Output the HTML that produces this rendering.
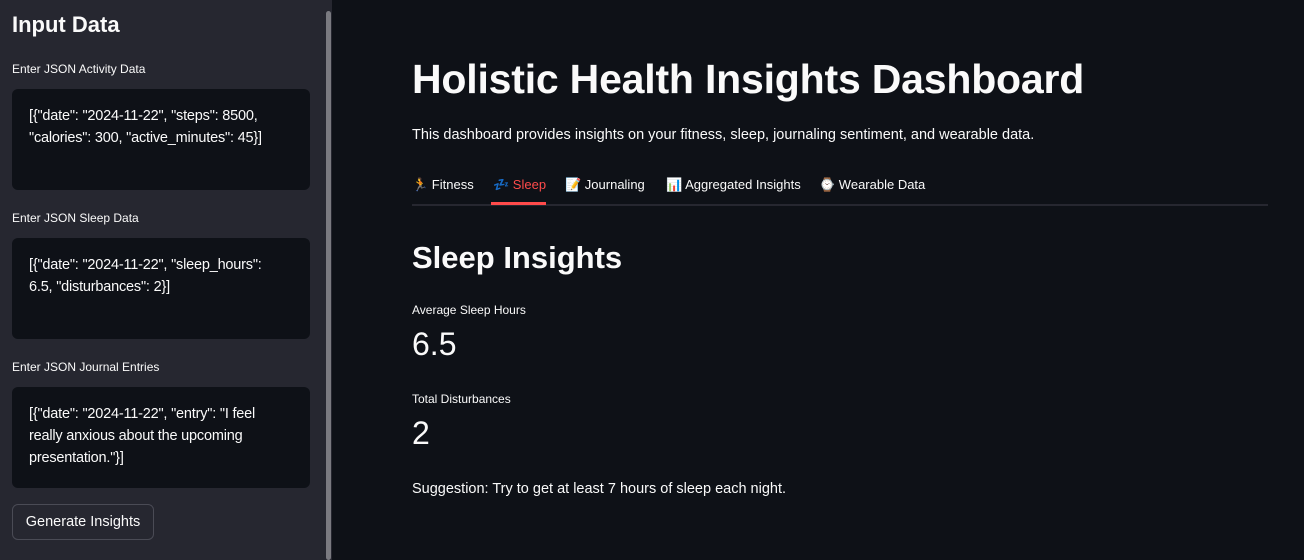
<!DOCTYPE html>
<html><head><style>
html,body{margin:0;width:1304px;height:560px;overflow:hidden}
body{background:#0e1117;font-family:"Liberation Sans",sans-serif;color:#fafafa;position:relative}
.side{position:absolute;left:0;top:0;width:332px;height:560px;background:#262730;overflow:hidden}
.sb{position:absolute;left:326px;top:11px;width:5px;height:549px;background:#7a7a80;border-radius:3px}
h2{position:absolute;left:12px;top:12px;margin:0;font-size:22px;font-weight:bold}
.lbl{position:absolute;left:12px;font-size:12px}
.ta{position:absolute;left:12px;width:298px;height:101px;background:#0e1117;border-radius:6px;box-sizing:border-box;padding:16px 30px 16px 17px;font-size:14.5px;line-height:22px;letter-spacing:-0.2px}
.btn{position:absolute;left:12px;top:504px;width:142px;height:36px;border:1px solid #4a4b55;border-radius:6px;box-sizing:border-box;font-size:14.5px;text-align:center;line-height:34px}
.m{position:absolute;left:412px}
h1{position:absolute;left:412px;top:56px;margin:0;font-size:41px;font-weight:bold;letter-spacing:-0.2px}
.tabs{position:absolute;left:412px;top:176px;width:856px;height:28px;border-bottom:2px solid #262730;font-size:13px}
.tabs span{position:absolute;top:1px}
.ul{position:absolute;left:79px;top:26px;width:55px;height:3px;background:#ff4b4b}
</style></head><body>
<div class="side">
<h2>Input Data</h2>
<div class="lbl" style="top:62px">Enter JSON Activity Data</div>
<div class="ta" style="top:89px">[{"date": "2024-11-22", "steps": 8500, "calories": 300, "active_minutes": 45}]</div>
<div class="lbl" style="top:211px">Enter JSON Sleep Data</div>
<div class="ta" style="top:238px">[{"date": "2024-11-22", "sleep_hours": 6.5, "disturbances": 2}]</div>
<div class="lbl" style="top:360px">Enter JSON Journal Entries</div>
<div class="ta" style="top:387px">[{"date": "2024-11-22", "entry": "I feel really anxious about the upcoming presentation."}]</div>
<div class="btn">Generate Insights</div>
<div class="sb"></div>
</div>
<h1>Holistic Health Insights Dashboard</h1>
<div class="m" style="top:127px;font-size:14.5px">This dashboard provides insights on your fitness, sleep, journaling sentiment, and wearable data.</div>
<div class="tabs">
<span style="left:0">🏃 Fitness</span>
<span style="left:81px;color:#ff4b4b">💤 Sleep</span>
<span style="left:153px">📝 Journaling</span>
<span style="left:254px">📊 Aggregated Insights</span>
<span style="left:407px">⌚ Wearable Data</span>
<div class="ul"></div>
</div>
<div class="m" style="top:240px;font-size:31px;font-weight:bold">Sleep Insights</div>
<div class="m" style="top:303px;font-size:12px">Average Sleep Hours</div>
<div class="m" style="top:326px;font-size:32px">6.5</div>
<div class="m" style="top:392px;font-size:12px">Total Disturbances</div>
<div class="m" style="top:415px;font-size:32px">2</div>
<div class="m" style="top:481px;font-size:14.5px">Suggestion: Try to get at least 7 hours of sleep each night.</div>
</body></html>
